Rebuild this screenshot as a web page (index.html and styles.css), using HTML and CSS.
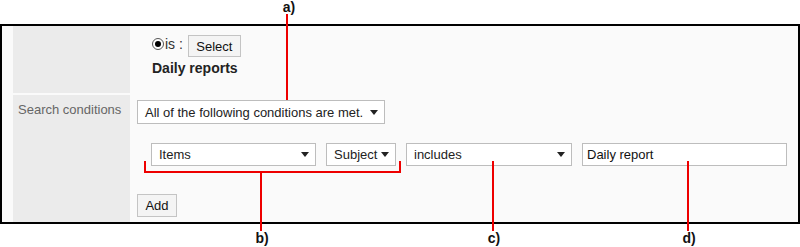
FILE: index.html
```html
<!DOCTYPE html>
<html>

<head>
   <title>Search conditions</title>
   <link rel="stylesheet" href="styles.css">
</head>

<body>
   <div class="frame">
      <div class="label-cell"></div>
      <div class="value-cell top-cell">
         <div class="target-line">
            <span class="radio"></span><span class="is">is :</span>
            <button class="btn select-btn">Select</button>
         </div>
         <div class="target-name">Daily reports</div>
      </div>

      <div class="label-cell">Search conditions</div>
      <div class="value-cell">
         <div class="select match">All of the following conditions are met.<span class="arrow"></span></div>
         <div class="cond-row">
            <div class="select items">Items<span class="arrow"></span></div>
            <div class="select subject">Subject<span class="arrow"></span></div>
            <div class="select includes">includes<span class="arrow"></span></div>
            <div class="text-input">Daily report</div>
         </div>
         <button class="btn add-btn">Add</button>
      </div>
   </div>

   <!-- callouts -->
   <div class="note-label label-a">a)</div>
   <div class="line line-a"></div>

   <div class="line bracket-left"></div>
   <div class="line bracket-bar"></div>
   <div class="line bracket-right"></div>
   <div class="line line-b"></div>
   <div class="note-label label-b">b)</div>

   <div class="line line-c"></div>
   <div class="note-label label-c">c)</div>

   <div class="line line-d"></div>
   <div class="note-label label-d">d)</div>
</body>

</html>
```

FILE: styles.css
```css
body {
   font-family: 'Liberation Sans', Arial, sans-serif;
   font-size: 13px;
   color: #222;
   background-color: #fff;
   margin: 0;
   position: relative;
   width: 800px;
   height: 247px;
   overflow: hidden;
}

.frame {
   box-sizing: border-box;
   width: 800px;
   height: 200px;
   margin-top: 24px;
   border: 2px solid #000;
   background-color: #fafafa;
   padding-left: 11px;
   display: grid;
   grid-template-columns: 117px 1fr;
   grid-template-rows: 67px 1fr;
   column-gap: 1px;
   row-gap: 2px;
}

.label-cell {
   background-color: #ebebeb;
   color: #666;
   padding: 7px 0 0 5px;
   line-height: 16px;
   white-space: nowrap;
}

.value-cell {
   padding: 5px 0 0 6px;
}

.top-cell {
   padding: 9px 0 0 21px;
}

.target-line {
   display: flex;
   align-items: center;
   height: 22px;
}

.radio {
   box-sizing: border-box;
   width: 12px;
   height: 12px;
   border: 1px solid #555;
   border-radius: 50%;
   background-color: #fff;
   display: flex;
   justify-content: center;
   align-items: center;
   margin-top: -4px;
}

.radio::after {
   content: "";
   width: 6px;
   height: 6px;
   border-radius: 50%;
   background-color: #000;
}

.is {
   color: #333;
   font-size: 14px;
   margin: -4px 5px 0 1px;
}

.btn {
   box-sizing: border-box;
   font-family: inherit;
   font-size: 13px;
   color: #111;
   background-color: #f4f4f4;
   border: 1px solid #c4c4c4;
   padding: 0;
   height: 22px;
}

.select-btn {
   width: 53px;
}

.target-name {
   font-weight: bold;
   font-size: 14px;
   color: #222;
   margin-top: 3px;
   line-height: 16px;
}

.select {
   box-sizing: border-box;
   height: 24px;
   background-color: #fff;
   border: 1px solid #bdbdbd;
   color: #222;
   display: flex;
   align-items: center;
   justify-content: space-between;
   padding: 0 6px 0 7px;
   white-space: nowrap;
}

.arrow {
   width: 0;
   height: 0;
   border-left: 4.5px solid transparent;
   border-right: 4.5px solid transparent;
   border-top: 5px solid #222;
}

.match {
   width: 248px;
}

.cond-row {
   display: flex;
   gap: 10px;
   margin: 19px 0 0 14px;
}

.cond-row .select,
.text-input {
   height: 23px;
}

.items {
   width: 165px;
}

.subject {
   width: 70px;
}

.includes {
   width: 166px;
}

.text-input {
   box-sizing: border-box;
   width: 205px;
   background-color: #fff;
   border: 1px solid #bdbdbd;
   color: #111;
   display: flex;
   align-items: center;
   padding-left: 4px;
}

.add-btn {
   width: 40px;
   height: 23px;
   margin-top: 28px;
}

/* callout lines drawn over the screenshot */
.line {
   position: absolute;
   background-color: #e00;
}

.note-label {
   position: absolute;
   font-weight: bold;
   font-size: 14px;
   line-height: 15px;
   color: #111;
   width: 30px;
   text-align: center;
}

.label-a { left: 274px; top: 0; }
.line-a { left: 286px; top: 14px; width: 2px; height: 86px; }

.bracket-left { left: 144px; top: 161px; width: 2px; height: 12px; }
.bracket-bar { left: 144px; top: 171px; width: 257px; height: 2px; }
.bracket-right { left: 399px; top: 161px; width: 2px; height: 12px; }
.line-b { left: 260px; top: 173px; width: 2px; height: 58px; }
.label-b { left: 247px; top: 231px; }

.line-c { left: 492px; top: 161px; width: 2px; height: 70px; }
.label-c { left: 479px; top: 231px; }

.line-d { left: 687px; top: 161px; width: 2px; height: 70px; }
.label-d { left: 674px; top: 231px; }
```
